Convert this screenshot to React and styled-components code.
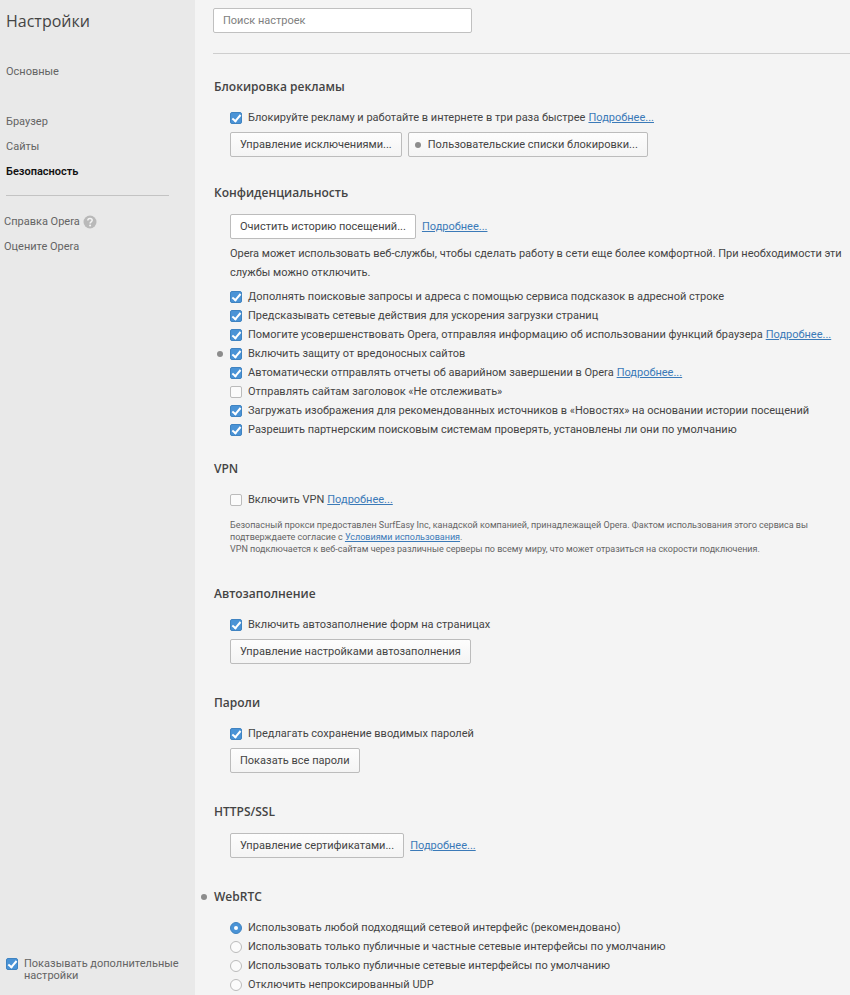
import React from 'react';
import styled, { createGlobalStyle } from 'styled-components';

function More() {
  return <Link href="#more">Подробнее...</Link>;
}

function Option({ type = 'checkbox', name, checked, marked, link, children }) {
  return (
    <OptionRow>
      {marked && <Dot $gutter />}
      <OptionLabel>
        <Control type={type} name={name} defaultChecked={checked} />
        <span>{children}</span>
      </OptionLabel>
      {link && <More />}
    </OptionRow>
  );
}

function Section({ title, marked, space, children }) {
  return (
    <SectionWrap $space={space}>
      <SectionTitle>
        {marked && <Dot $gutter />}
        {title}
      </SectionTitle>
      <SectionBody>{children}</SectionBody>
    </SectionWrap>
  );
}

function Sidebar() {
  return (
    <SidebarWrap>
      <PageTitle>Настройки</PageTitle>
      <Nav>
        <NavLink href="#basic">Основные</NavLink>
        <NavGroup>
          <NavLink href="#browser">Браузер</NavLink>
          <NavLink href="#sites">Сайты</NavLink>
          <NavLink href="#security" $active>Безопасность</NavLink>
        </NavGroup>
      </Nav>
      <SidebarLine />
      <HelpLinks>
        <NavLink href="#help">
          Справка Opera
          <HelpIcon viewBox="0 0 14 14" aria-hidden="true">
            <circle cx="7" cy="7" r="6.5" fill="#b9b9b9" />
            <path
              d="M4.8 5.6C4.8 4.2 5.8 3.4 7 3.4s2.2.7 2.2 1.9c0 1.5-2.1 1.5-2.1 3.2"
              fill="none"
              stroke="#f4f4f4"
              strokeWidth="1.5"
            />
            <circle cx="7.1" cy="10.5" r="1" fill="#f4f4f4" />
          </HelpIcon>
        </NavLink>
        <NavLink href="#rate">Оцените Opera</NavLink>
      </HelpLinks>
      <Advanced>
        <Control type="checkbox" defaultChecked />
        <span>Показывать дополнительные настройки</span>
      </Advanced>
    </SidebarWrap>
  );
}

function App() {
  return (
    <Layout>
      <GlobalStyle />
      <Sidebar />
      <Main>
        <SearchBar>
          <Search type="text" placeholder="Поиск настроек" aria-label="Поиск настроек" />
        </SearchBar>

        <Section title="Блокировка рекламы" space="26px">
          <Option checked link>Блокируйте рекламу и работайте в интернете в три раза быстрее</Option>
          <ButtonRow>
            <Button>Управление исключениями...</Button>
            <Button>
              <Dot />
              Пользовательские списки блокировки...
            </Button>
          </ButtonRow>
        </Section>

        <Section title="Конфиденциальность" space="20px">
          <ButtonRow>
            <Button $plain>Очистить историю посещений...</Button>
            <More />
          </ButtonRow>
          <Text>
            Opera может использовать веб-службы, чтобы сделать работу в сети еще более
            комфортной. При необходимости эти службы можно отключить.
          </Text>
          <div>
            <Option checked>Дополнять поисковые запросы и адреса с помощью сервиса подсказок в адресной строке</Option>
            <Option checked>Предсказывать сетевые действия для ускорения загрузки страниц</Option>
            <Option checked link>Помогите усовершенствовать Opera, отправляя информацию об использовании функций браузера</Option>
            <Option checked marked>Включить защиту от вредоносных сайтов</Option>
            <Option checked link>Автоматически отправлять отчеты об аварийном завершении в Opera</Option>
            <Option>Отправлять сайтам заголовок «Не отслеживать»</Option>
            <Option checked>Загружать изображения для рекомендованных источников в «Новостях» на основании истории посещений</Option>
            <Option checked>Разрешить партнерским поисковым системам проверять, установлены ли они по умолчанию</Option>
          </div>
        </Section>

        <Section title="VPN">
          <Option link>Включить VPN</Option>
          <Note>
            Безопасный прокси предоставлен SurfEasy Inc, канадской компанией, принадлежащей Opera.
            Фактом использования этого сервиса вы подтверждаете согласие
            с <Link href="#terms">Условиями использования</Link>.
            <br />
            VPN подключается к веб-сайтам через различные серверы по всему миру, что может
            отразиться на скорости подключения.
          </Note>
        </Section>

        <Section title="Автозаполнение">
          <Option checked>Включить автозаполнение форм на страницах</Option>
          <ButtonRow>
            <Button>Управление настройками автозаполнения</Button>
          </ButtonRow>
        </Section>

        <Section title="Пароли">
          <Option checked>Предлагать сохранение вводимых паролей</Option>
          <ButtonRow>
            <Button>Показать все пароли</Button>
          </ButtonRow>
        </Section>

        <Section title="HTTPS/SSL">
          <ButtonRow>
            <Button>Управление сертификатами...</Button>
            <More />
          </ButtonRow>
        </Section>

        <Section title="WebRTC" marked space="0">
          <div>
            <Option type="radio" name="webrtc" checked>Использовать любой подходящий сетевой интерфейс (рекомендовано)</Option>
            <Option type="radio" name="webrtc">Использовать только публичные и частные сетевые интерфейсы по умолчанию</Option>
            <Option type="radio" name="webrtc">Использовать только публичные сетевые интерфейсы по умолчанию</Option>
            <Option type="radio" name="webrtc">Отключить непроксированный UDP</Option>
          </div>
        </Section>
      </Main>
    </Layout>
  );
}

export default App;

// Styles

const GlobalStyle = createGlobalStyle`
  *, *::after {
    box-sizing: border-box;
  }

  body {
    margin: 0;
    background: #f4f4f4;
    color: #444;
    font-family: Roboto, 'Open Sans', sans-serif;
    font-size: 11px;
    line-height: 19px;
  }

  button, input {
    font: inherit;
    color: inherit;
  }
`

const Layout = styled.div`
  display: flex;
  min-height: 100vh;
`

const SidebarWrap = styled.aside`
  position: sticky;
  top: 0;
  display: flex;
  flex-direction: column;
  flex: 0 0 195px;
  height: 100vh;
  padding: 8px 0 13px;
  background: #e9e9e9;
`

const PageTitle = styled.h1`
  margin: 0 6px 25px;
  font-family: 'Open Sans', sans-serif;
  font-size: 16px;
  font-weight: 400;
  line-height: 26px;
`

const Nav = styled.nav`
  display: flex;
  flex-direction: column;
  padding: 0 6px;
`

const NavGroup = styled.div`
  display: flex;
  flex-direction: column;
  margin-top: 25px;
`

const NavLink = styled.a`
  display: flex;
  align-items: center;
  gap: 3px;
  color: ${({ $active }) => ($active ? '#111' : '#646464')};
  font-weight: ${({ $active }) => ($active ? 600 : 400)};
  line-height: 25px;
  text-decoration: none;
`

const SidebarLine = styled.hr`
  width: 163px;
  margin: 11px 6px 13px;
  border: 0;
  border-top: 1px solid #c3c3c3;
`

const HelpLinks = styled.div`
  display: flex;
  flex-direction: column;
  padding: 0 4px;
`

const HelpIcon = styled.svg`
  width: 14px;
  height: 14px;
`

const Advanced = styled.label`
  display: flex;
  gap: 6px;
  margin-top: auto;
  padding: 0 6px;
  color: #646464;
  line-height: 12px;
`

const Main = styled.main`
  flex: 1;
  min-width: 0;
  padding-left: 18px;
`

const SearchBar = styled.div`
  padding: 8px 0 20px;
  margin-bottom: 23px;
  border-bottom: 1px solid #cecece;
`

const Search = styled.input`
  display: block;
  width: 259px;
  height: 25px;
  padding: 0 9px;
  border: 1px solid #c0c0c0;
  border-radius: 2px;
  background: #fff;

  &::placeholder {
    color: #808080;
    opacity: 1;
  }
`

const SectionWrap = styled.section`
  padding-bottom: ${({ $space = '29px' }) => $space};
`

const SectionTitle = styled.h2`
  display: flex;
  align-items: center;
  margin: 0 0 11px;
  padding-left: 1px;
  font-family: 'Open Sans', sans-serif;
  font-size: 12px;
  font-weight: 600;
  line-height: 20px;
`

const SectionBody = styled.div`
  display: flex;
  flex-direction: column;
  gap: 5px;
  padding-left: 17px;
`

const OptionRow = styled.div`
  display: flex;
  align-items: center;
`

const OptionLabel = styled.label`
  display: flex;
  align-items: center;
  gap: 6px;
  margin-right: 3px;
`

const Control = styled.input`
  display: grid;
  place-items: center;
  flex: none;
  appearance: none;
  width: 12px;
  height: 12px;
  margin: 0;
  border: 1px solid #bbb;
  border-radius: ${({ type }) => (type === 'radio' ? '50%' : '2px')};
  background: #fbfbfb;

  &:checked {
    border-color: #3f83c1;
    background: #4a93d6;
  }

  &:checked::after {
    content: '';
    ${({ type }) =>
      type === 'radio'
        ? `
    width: 4px;
    height: 4px;
    border-radius: 50%;
    background: #fff;
    `
        : `
    width: 5px;
    height: 9px;
    margin-bottom: 2px;
    border: solid #fff;
    border-width: 0 2px 2px 0;
    transform: rotate(40deg);
    `}
  }
`

const Dot = styled.span`
  flex: none;
  width: 6px;
  height: 6px;
  margin-right: 7px;
  margin-left: ${({ $gutter }) => ($gutter ? '-13px' : '-3px')};
  border-radius: 50%;
  background: #8c8c8c;
`

const ButtonRow = styled.div`
  display: flex;
  align-items: center;
  gap: 6px;
`

const Button = styled.button.attrs({ type: 'button' })`
  display: flex;
  align-items: center;
  height: 25px;
  padding: 0 9px;
  border: 1px solid #bcbcbc;
  border-radius: 2px;
  background: ${({ $plain }) => ($plain ? '#fff' : 'linear-gradient(#fdfdfd, #f4f4f4)')};
  white-space: nowrap;
  cursor: pointer;
`

const Link = styled.a`
  color: #3b7ab8;
  text-decoration: underline;
`

const Text = styled.p`
  margin: 0;
`

const Note = styled.p`
  max-width: 600px;
  margin: 5px 0 0;
  color: #646464;
  font-size: 9px;
  line-height: 12px;
`
